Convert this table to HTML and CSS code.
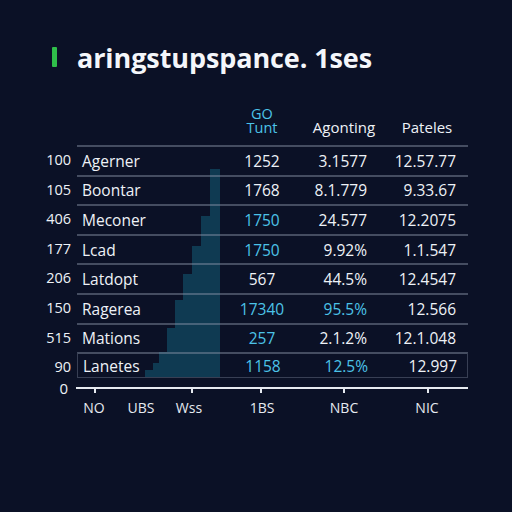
FILE: index.html
```html
<!DOCTYPE html>
<html>
<head>
<meta charset="utf-8">
<link rel="stylesheet" href="styles.css">
</head>
<body>
<div class="page">
  <h1 class="title"><span class="mark"></span><span>aringstupspance. 1ses</span></h1>
  <div class="board">
    <svg class="bars" width="512" height="512" viewBox="0 0 512 512">
      <polygon points="145,377 145,370 153,370 153,363 159,363 159,352 167,352 167,328 175,328 175,300 183,300 183,274 192,274 192,246 201,246 201,216 210,216 210,169 220,169 220,377" fill="#0f3a52"/>
    </svg>
    <div class="head">
      <div class="hname"></div>
      <div class="hcell cyan"><div class="hl">GO</div><div class="hl">Tunt</div></div>
      <div class="hcell">Agonting</div>
      <div class="hcell">Pateles</div>
    </div>
    <div class="rows">
      <div class="row"><span class="num">100</span><div class="cells"><span class="name">Agerner</span><span class="c2">1252</span><span class="c3">3.1577</span><span class="c4">12.57.77</span></div></div>
      <div class="row"><span class="num">105</span><div class="cells"><span class="name">Boontar</span><span class="c2">1768</span><span class="c3">8.1.779</span><span class="c4">9.33.67</span></div></div>
      <div class="row"><span class="num">406</span><div class="cells"><span class="name">Meconer</span><span class="c2 cyan">1750</span><span class="c3">24.577</span><span class="c4">12.2075</span></div></div>
      <div class="row"><span class="num">177</span><div class="cells"><span class="name">Lcad</span><span class="c2 cyan">1750</span><span class="c3">9.92%</span><span class="c4">1.1.547</span></div></div>
      <div class="row"><span class="num">206</span><div class="cells"><span class="name">Latdopt</span><span class="c2">567</span><span class="c3">44.5%</span><span class="c4">12.4547</span></div></div>
      <div class="row"><span class="num">150</span><div class="cells"><span class="name">Ragerea</span><span class="c2 cyan">17340</span><span class="c3 cyan">95.5%</span><span class="c4">12.566</span></div></div>
      <div class="row"><span class="num">515</span><div class="cells"><span class="name">Mations</span><span class="c2 cyan">257</span><span class="c3">2.1.2%</span><span class="c4">12.1.048</span></div></div>
      <div class="row last"><span class="num">90</span><div class="cells"><span class="name">Lanetes</span><span class="c2 cyan">1158</span><span class="c3 cyan">12.5%</span><span class="c4">12.997</span></div></div>
    </div>
    <div class="axis">
      <span class="zero">0</span>
      <div class="line">
        <i class="tick t1"></i><i class="tick t2"></i><i class="tick t3"></i><i class="tick t4"></i><i class="tick t5"></i>
      </div>
    </div>
    <div class="xlabels">
      <span>NO</span><span>UBS</span><span>Wss</span><span></span><span>1BS</span><span>NBC</span><span>NIC</span>
    </div>
  </div>
</div>
</body>
</html>
```

FILE: styles.css
```css
* { box-sizing: border-box; }
html, body {
  margin: 0;
  padding: 0;
  background: #0b1126;
}
body {
  width: 512px;
  height: 512px;
  overflow: hidden;
  font-family: "Open Sans", "DejaVu Sans", sans-serif;
  color: #eef2f7;
}
.page {
  padding-top: 40px;
}
.title {
  display: flex;
  align-items: center;
  gap: 20px;
  margin: 0 0 0 52px;
  height: 34px;
  font-size: 27px;
  font-weight: 700;
  letter-spacing: -0.1px;
  color: #f4f6fa;
}
.mark {
  width: 5px;
  height: 20px;
  background: #2fbf4a;
  border-radius: 1px;
}
.board {
  position: relative;
  margin-top: 31px;
}
.bars {
  position: absolute;
  left: 0;
  top: -105px;
  z-index: 0;
}
.head, .rows, .axis, .xlabels { position: relative; z-index: 1; }
.head {
  display: grid;
  grid-template-columns: 145px 80px 84px 82px;
  margin-left: 77px;
  width: 391px;
  height: 40px;
  align-items: end;
  padding-bottom: 10px;
}
.hcell {
  text-align: center;
  font-size: 15px;
  line-height: 15px;
}
.hl {
  font-size: 14.5px;
  line-height: 14px;
  height: 14px;
}
.cyan { color: #4cc3e8; }
.rows {
  display: flex;
  flex-direction: column;
}
.row {
  display: flex;
  align-items: stretch;
  height: 29.6px;
}
.num {
  width: 71px;
  text-align: right;
  font-size: 14.5px;
  line-height: 29.6px;
  margin-right: 6px;
}
.cells {
  width: 391px;
  border-top: 2px solid rgba(140, 150, 170, 0.45);
  display: grid;
  grid-template-columns: 145px 80px 65px 89px 12px;
  align-items: center;
  font-size: 15.5px;
}
.row.last .cells {
  border: 1px solid rgba(140, 150, 170, 0.35);
  border-top: 2px solid rgba(140, 150, 170, 0.45);
  height: 26px;
}
.name { padding-left: 5px; }
.c2 { text-align: center; }
.c3 { text-align: right; }
.c4 { text-align: right; }
.axis {
  display: flex;
  align-items: center;
  height: 14px;
  margin-top: -1px;
}
.zero {
  width: 68px;
  text-align: right;
  font-size: 15px;
  margin-right: 8px;
}
.line {
  position: relative;
  width: 392px;
  height: 2px;
  background: #e6eaf0;
}
.tick {
  position: absolute;
  top: 2px;
  width: 2px;
  height: 4px;
  background: #e6eaf0;
}
.t1 { left: 18px; }
.t2 { left: 115px; }
.t3 { left: 184px; }
.t4 { left: 267px; }
.t5 { left: 351px; }
.xlabels {
  display: grid;
  grid-template-columns: 34px 60px 36px 15px 80px 84px 82px;
  margin-left: 77px;
  width: 391px;
  margin-top: 3px;
  font-size: 14px;
  line-height: 20px;
  text-align: center;
  color: #e6eaf0;
}
```
